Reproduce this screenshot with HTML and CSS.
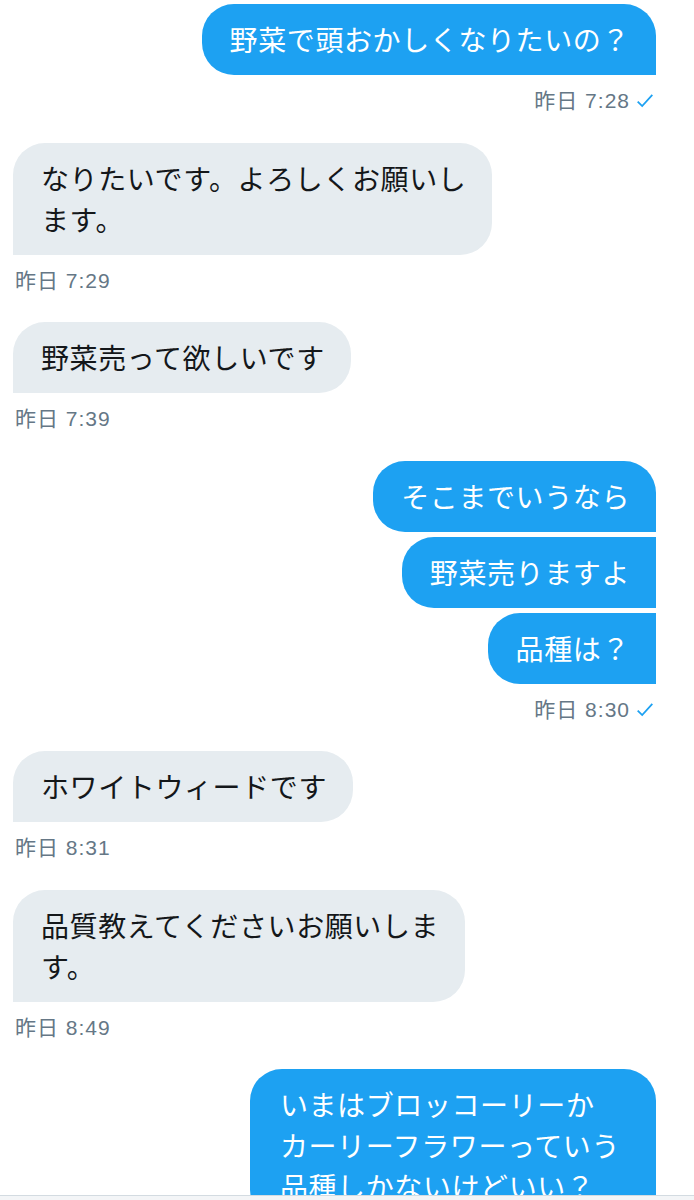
FILE: index.html
```html
<!DOCTYPE html>
<html lang="ja">
<head>
  <meta charset="UTF-8">
  <meta name="viewport" content="width=device-width, initial-scale=1.0">
  <title>メッセージ</title>
  <link rel="stylesheet" href="styles.css">
</head>
<body>
  <div class="thread">
    <div class="group out">
      <div class="bubble">野菜で頭おかしくなりたいの？</div>
      <div class="meta">昨日 7:28 <svg class="check" viewBox="0 0 16 14"><path d="M1.5 7.5 L5.5 11.5 L14.5 1.5" /></svg></div>
    </div>

    <div class="group in">
      <div class="bubble">なりたいです。よろしくお願いし<br>ます。</div>
      <div class="meta">昨日 7:29</div>
    </div>

    <div class="group in">
      <div class="bubble">野菜売って欲しいです</div>
      <div class="meta">昨日 7:39</div>
    </div>

    <div class="group out">
      <div class="bubble">そこまでいうなら</div>
      <div class="bubble">野菜売りますよ</div>
      <div class="bubble">品種は？</div>
      <div class="meta">昨日 8:30 <svg class="check" viewBox="0 0 16 14"><path d="M1.5 7.5 L5.5 11.5 L14.5 1.5" /></svg></div>
    </div>

    <div class="group in">
      <div class="bubble">ホワイトウィードです</div>
      <div class="meta">昨日 8:31</div>
    </div>

    <div class="group in">
      <div class="bubble">品質教えてくださいお願いしま<br>す。</div>
      <div class="meta">昨日 8:49</div>
    </div>

    <div class="group out">
      <div class="bubble wide">いまはブロッコーリーか<br>カーリーフラワーっていう<br>品種しかないけどいい？</div>
    </div>
  </div>

  <div class="composer"></div>
</body>
</html>
```

FILE: styles.css
```css
body {
  margin: 0;
  background: #fff;
  font-family: "Noto Sans CJK JP", "Noto Sans", sans-serif;
}
.thread {
  display: flex;
  flex-direction: column;
  padding: 4px 38px 0 13px;
}
.group {
  display: flex;
  flex-direction: column;
  gap: 5px;
  margin-bottom: 29.5px;
}
.group.out {
  align-items: flex-end;
}
.group.in {
  align-items: flex-start;
}
.bubble {
  box-sizing: border-box;
  max-width: 500px;
  padding: 15px 26px 15px 28px;
  border-radius: 32px;
  font-size: 28px;
  line-height: 41px;
  letter-spacing: 0.6px;
}
.bubble.wide {
  padding-right: 36px;
  padding-left: 30px;
}
.out .bubble {
  background: #1da1f2;
  color: #fff;
  border-bottom-right-radius: 0;
}
.out .bubble + .bubble {
  border-top-right-radius: 0;
}
.in .bubble {
  background: #e6ecf0;
  color: #14171a;
  border-bottom-left-radius: 0;
}
.meta {
  margin-top: 9px;
  font-family: "Liberation Sans", "Noto Sans CJK JP", sans-serif;
  font-size: 21px;
  line-height: 24px;
  letter-spacing: 1px;
  color: #657786;
  display: flex;
  align-items: center;
  gap: 6px;
}
.in .meta {
  padding-left: 2px;
}
.out .meta {
  padding-right: 2px;
}
.check {
  width: 18px;
  height: 16px;
  fill: none;
  stroke: #1da1f2;
  stroke-width: 1.6;
}
.composer {
  position: fixed;
  left: 0;
  right: 0;
  bottom: 0;
  height: 4px;
  border-top: 1px solid #d3dbe1;
  background: #f3f5f7;
}
```
